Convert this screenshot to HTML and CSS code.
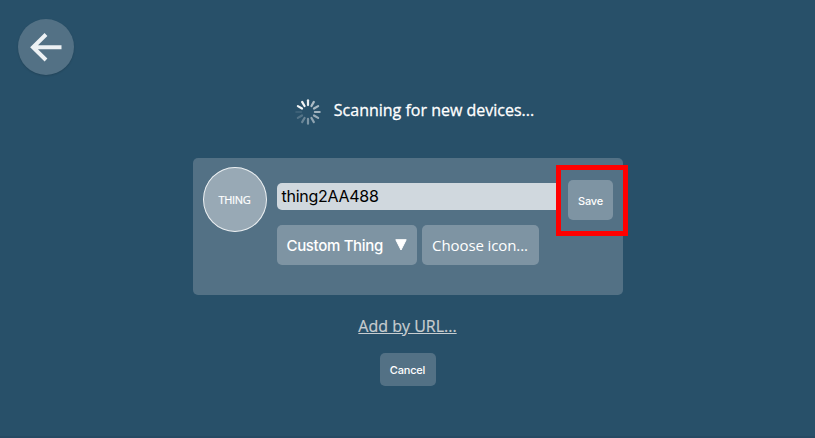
FILE: index.html
```
<!DOCTYPE html>
<html lang="en">
<head>
<meta charset="utf-8">
<title>Add Things</title>
<link rel="stylesheet" href="styles.css">
</head>
<body>
<button class="back" aria-label="Back">
  <svg width="56" height="56" viewBox="0 0 56 56" fill="none" stroke="#edf1f4" stroke-width="4">
    <path d="M43.5 28.3H16M28 15.5 15 28.3 28 41"/>
  </svg>
</button>
<main class="screen">
  <div class="status">
    <svg class="spinner" width="26" height="26" viewBox="-13 -13 26 26" stroke="#fff" stroke-width="2.2" stroke-linecap="round">
      <path d="M0-6.9V-11.7" opacity=".9"/>
      <path d="M0-6.9V-11.7" opacity=".62" transform="rotate(30)"/>
      <path d="M0-6.9V-11.7" opacity=".6" transform="rotate(60)"/>
      <path d="M0-6.9V-11.7" opacity=".57" transform="rotate(90)"/>
      <path d="M0-6.9V-11.7" opacity=".53" transform="rotate(120)"/>
      <path d="M0-6.9V-11.7" opacity=".48" transform="rotate(150)"/>
      <path d="M0-6.9V-11.7" opacity=".4" transform="rotate(180)"/>
      <path d="M0-6.9V-11.7" opacity=".3" transform="rotate(210)"/>
      <path d="M0-6.9V-11.7" opacity=".2" transform="rotate(240)"/>
      <path d="M0-6.9V-11.7" opacity=".09" transform="rotate(270)"/>
      <path d="M0-6.9V-11.7" opacity=".95" transform="rotate(300)"/>
      <path d="M0-6.9V-11.7" opacity=".95" transform="rotate(330)"/>
    </svg>
    <span class="status-text">Scanning for new devices...</span>
  </div>
  <section class="thing">
    <div class="thing-icon">THING</div>
    <div class="fields">
      <div class="name">thing2AA488</div>
      <div class="options">
        <div class="select"><span class="select-text">Custom Thing</span>
          <svg width="12" height="12" viewBox="0 0 12 12" fill="#fff" stroke="#fff" stroke-linejoin="round"><path d="M.8.7H11.2L6 11Z"/></svg>
        </div>
        <button class="choose"><span class="choose-text">Choose icon...</span></button>
      </div>
    </div>
    <div class="highlight"><button class="save">Save</button></div>
  </section>
  <a class="url" href="#">Add by URL...</a>
  <button class="cancel">Cancel</button>
</main>
</body>
</html>
```
FILE: styles.css
```
* { box-sizing: border-box; }
body {
  margin: 0;
  height: 438px;
  overflow: hidden;
  background: #285069;
  border-bottom: 2px solid #264a63;
  color: #fff;
  font-family: "Open Sans", sans-serif;
}
button {
  border: 0;
  padding: 0;
  color: #fff;
  font: 500 11px Inter, sans-serif;
  letter-spacing: -.2px;
  white-space: nowrap;
}
.back {
  position: absolute;
  left: 18px;
  top: 19px;
  width: 56px;
  height: 56px;
  border-radius: 50%;
  background: #537185;
  box-shadow: 0 1px 2px rgba(0, 0, 0, .15);
}
.back svg { display: block; }
.screen {
  display: flex;
  flex-direction: column;
  align-items: center;
  padding-top: 98px;
}
.status {
  display: flex;
  gap: 13px;
  height: 26px;
  line-height: 24px;
  font-size: 16px;
  margin-left: 14px;
  white-space: nowrap;
  -webkit-text-stroke: .3px;
}
.spinner { margin-top: .5px; }
.thing {
  display: flex;
  width: 430px;
  height: 137px;
  margin-top: 34px;
  padding-left: 10px;
  border-radius: 5px;
  background: #537185;
}
.thing-icon {
  flex: none;
  width: 64px;
  height: 65px;
  margin-top: 9px;
  border: 1px solid #edf1f3;
  border-radius: 50%;
  background: #98a9b5;
  font-size: 11px;
  letter-spacing: -.3px;
  -webkit-text-stroke: .2px;
  line-height: 63px;
  text-align: center;
}
.fields {
  flex: none;
  width: 279px;
  margin: 25px 0 0 10px;
}
.name {
  height: 27px;
  padding-left: 5px;
  border-radius: 5px 0 0 5px;
  background: #d0d8de;
  color: #000;
  font: 16px/27px Inter, sans-serif;
  letter-spacing: -.27px;
}
.options {
  display: flex;
  gap: 5px;
  margin-top: 15px;
}
.select {
  display: flex;
  align-items: center;
  justify-content: space-between;
  width: 140px;
  height: 40px;
  padding: 0 10px;
  border-radius: 5px;
  background: #7e94a3;
  font: 500 15px Inter, sans-serif;
  letter-spacing: -.33px;
}
.choose {
  width: 117px;
  height: 40px;
  border-radius: 5px;
  background: #7e94a3;
  font: 500 15px "Open Sans", sans-serif;
  letter-spacing: -.1px;
}
.highlight {
  flex: none;
  display: flex;
  align-items: center;
  justify-content: center;
  width: 72px;
  height: 71px;
  margin-top: 7px;
  padding: 0 2px 2px 0;
  border: 5px solid #f00;
}
.save {
  width: 45px;
  height: 40px;
  padding-top: 2px;
  border-radius: 5px;
  background: #7e94a3;
}
.url {
  margin-top: 20px;
  color: #c8cdd0;
  font-size: 16px;
  line-height: 22px;
  -webkit-text-stroke: .2px;
}
.cancel {
  width: 56px;
  height: 33px;
  margin-top: 16px;
  border-radius: 5px;
  background: #537185;
}
```
